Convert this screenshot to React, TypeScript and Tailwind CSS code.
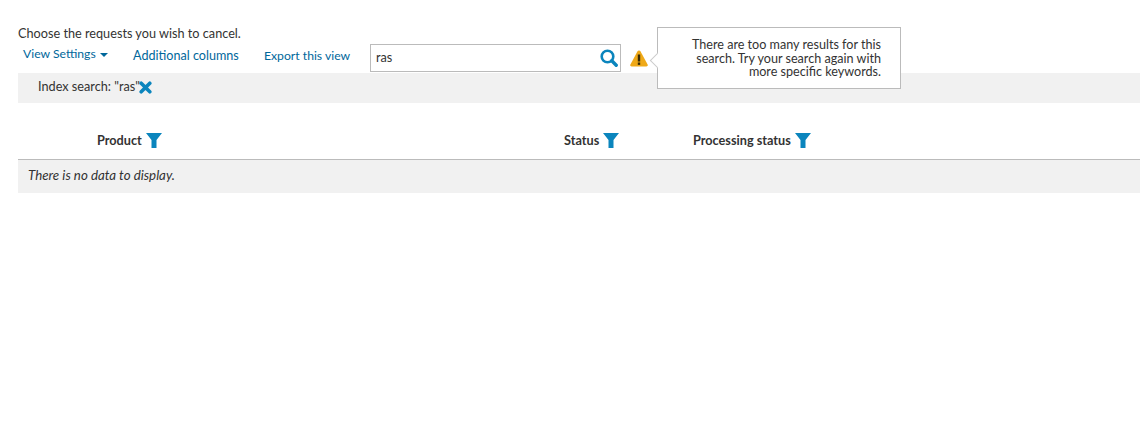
function FilterIcon() {
  return (
    <svg viewBox="0 0 16 15" className="ml-[4px] h-[15px] w-[16px] shrink-0 fill-[#0b85bd]">
      <path d="M0 0h16L10.500 7v8h-5V7z" />
    </svg>
  );
}

export default function App() {
  return (
    <div className="relative h-[433px] w-[1140px] overflow-hidden bg-white pl-[18px] pt-[26px] font-['Lato',sans-serif] text-[12.7px] text-[#333]">
      <p className="h-[15px] leading-[15px]">Choose the requests you wish to cancel.</p>

      <div className="flex h-[32px] items-center text-[#00679b]">
        <a className="ml-[5px] flex w-[110px] items-center pb-[5px] text-[12.200px]">
          View Settings
          <span className="ml-[4px] mt-[2px] h-0 w-0 border-x-[4px] border-t-[4px] border-x-transparent border-t-[#00679b]" />
        </a>
        <a className="w-[131px] pb-[2px] text-[12.600px]">Additional columns</a>
        <a className="w-[106px] pb-[2px] text-[12.200px]">Export this view</a>
        <div className="mt-[2px] flex h-[28px] w-[251px] items-center justify-between border border-[#bbb] bg-white pl-[5px] pr-[2px] text-[#333]">
          <span>ras</span>
          <svg viewBox="0 0 18 18" className="h-[18px] w-[18px] fill-none stroke-[#0b85bd]">
            <circle cx="7.500" cy="7.500" r="5.800" strokeWidth="2.600" />
            <path d="M11.800 11.800L16.200 16.200" strokeWidth="3.400" strokeLinecap="round" />
          </svg>
        </div>
        <svg viewBox="0 0 18 17" className="ml-[9px] mt-[3px] h-[17px] w-[18px]">
          <path d="M9 0.500c.7 0 1.200.4 1.600 1.100l7 13c.5 1-.1 1.900-1.200 1.900H1.600C.5 16.500-.1 15.600.4 14.600l7-13C7.800.9 8.300.5 9 .5z" fill="#efa918" />
          <rect x="7.800" y="4.500" width="2.400" height="7" fill="#3a2c05" />
          <rect x="7.800" y="12.500" width="2.400" height="2.400" fill="#3a2c05" />
        </svg>
      </div>

      <div className="flex h-[30px] items-center bg-[#f1f1f1] pb-[2px] pl-[20px]">
        <span className="w-[101px] whitespace-nowrap">Index search: "ras"</span>
        <svg viewBox="0 0 13 13" className="h-[13px] w-[13px] stroke-[#0b85bd]">
          <path d="M2.200 2.200L10.800 10.800M10.800 2.200L2.200 10.800" strokeWidth="3.600" strokeLinecap="round" />
        </svg>
      </div>

      <div className="mt-[20px] flex h-[37px] items-center border-b border-[#bbb] text-[12.700px] font-bold">
        <div className="flex w-[546px] items-center pl-[79px]">
          Product
          <FilterIcon />
        </div>
        <div className="flex w-[129px] items-center">
          Status
          <FilterIcon />
        </div>
        <div className="flex items-center">
          Processing status
          <FilterIcon />
        </div>
      </div>

      <div className="flex h-[33px] items-center bg-[#f1f1f1] pb-[2px] pl-[10px] text-[13.300px] italic">There is no data to display.</div>

      {/* warning popover */}
      <div className="absolute left-[657px] top-[27px] h-[62px] w-[244px] border border-[#bbb] bg-white pr-[19px] pt-[10px] text-right text-[12.600px] leading-[13.500px] text-[#333]">
        <span className="absolute left-[-6px] top-[27px] h-[11px] w-[11px] rotate-45 border-b border-l border-[#ccc] bg-white" />
        <p className="ml-auto w-[200px]">There are too many results for this search. Try your search again with more specific keywords.</p>
      </div>
    </div>
  );
}
